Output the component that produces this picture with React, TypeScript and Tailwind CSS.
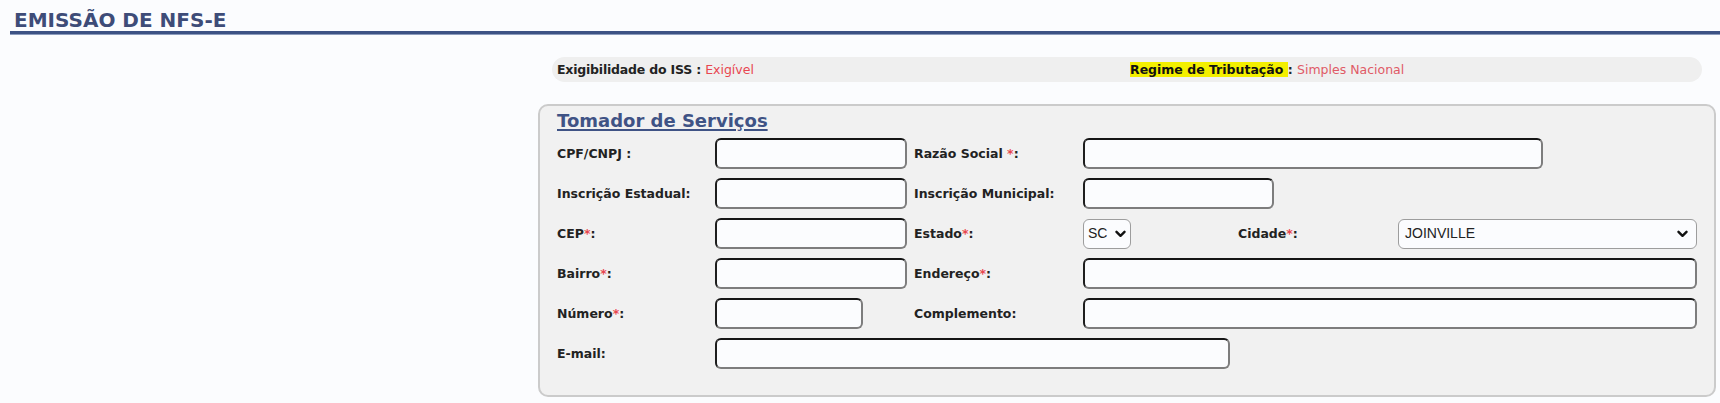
import React from "react";

const Req = () => <span className="text-[#e8464f]">*</span>;

const inputCls =
  "h-[31px] rounded-[6px] bg-[#fbfcfe] border-2 border-t-[#151515] border-l-[#1e1e1e] border-r-[#7d7d7d] border-b-[#7d7d7d]";

function Chevron() {
  return (
    <svg width="11" height="8" viewBox="0 0 11 8" fill="none">
      <path d="M1.5 1.8 L5.5 5.8 L9.5 1.8" stroke="#111" strokeWidth="2.4" strokeLinecap="round" strokeLinejoin="round" />
    </svg>
  );
}

function Label({ children }: { children: React.ReactNode }) {
  return <div className="text-[12.5px] font-bold text-[#222] leading-[15px]">{children}</div>;
}

export default function App() {
  return (
    <div className="min-h-screen bg-[#fbfcfe] font-['DejaVu_Sans',Verdana,sans-serif]">
      <div className="pt-[10px] pl-[10px]">
        <h1 className="pl-[4px] text-[20px] leading-[21px] font-bold text-[#3e4c78]">EMISSÃO DE NFS-E</h1>
        <div className="h-[4px] bg-[#3d5284] border-b border-b-[#8c9cbd]" />
      </div>

      <div className="ml-[552px] mr-[18px]">
        <div className="mt-[22px] h-[25px] rounded-full bg-[#efefef] grid grid-cols-2 items-center text-[12.5px] leading-[15px]">
          <div className="pl-[5px]">
            <span className="font-bold text-[#222] tracking-[-0.2px]">Exigibilidade do ISS : </span>
            <span className="text-[#e8464f]">Exigível</span>
          </div>
          <div className="pl-[3px]">
            <span className="font-bold text-[#111] bg-[#f3ef00]">Regime de Tributação </span>
            <span className="font-bold text-[#222]">: </span>
            <span className="text-[#e05a66]">Simples Nacional</span>
          </div>
        </div>

        <div className="mt-[22px] -ml-[14px] -mr-[14px] h-[293px] rounded-[10px] border-2 border-[#cbcbcb] bg-[#f1f1f1] pl-[17px] pr-[17px] pt-[4px]">
          <h2 className="text-[18px] leading-[21px] font-bold text-[#3f5385] underline underline-offset-[2px] decoration-[1.5px]">
            Tomador de Serviços
          </h2>

          <div className="mt-[7px] grid grid-cols-[158px_199px_169px_1fr] auto-rows-[31px] gap-y-[9px] items-center">
            <Label>CPF/CNPJ :</Label>
            <div className={`${inputCls} w-[192px]`} />
            <Label>Razão Social <Req />:</Label>
            <div className={`${inputCls} w-[460px]`} />

            <Label>Inscrição Estadual:</Label>
            <div className={`${inputCls} w-[192px]`} />
            <Label>Inscrição Municipal:</Label>
            <div className={`${inputCls} w-[191px]`} />

            <Label>CEP<Req />:</Label>
            <div className={`${inputCls} w-[192px]`} />
            <Label>Estado<Req />:</Label>
            <div className="flex items-center">
              <div className="w-[48px] h-[30px] rounded-[6px] border border-[#9d9d9d] bg-[#fbfcfe] flex items-center justify-between pl-[4px] pr-[4px] font-['Liberation_Sans',Arial,sans-serif] text-[14px] text-[#222]">
                <span>SC</span>
                <Chevron />
              </div>
              <div className="ml-[107px] w-[160px]">
                <Label>Cidade<Req />:</Label>
              </div>
              <div className="flex-1 h-[30px] rounded-[6px] border border-[#9d9d9d] bg-[#fbfcfe] flex items-center justify-between pl-[6px] pr-[8px] font-['Liberation_Sans',Arial,sans-serif] text-[14px] text-[#222]">
                <span>JOINVILLE</span>
                <Chevron />
              </div>
            </div>

            <Label>Bairro<Req />:</Label>
            <div className={`${inputCls} w-[192px]`} />
            <Label>Endereço<Req />:</Label>
            <div className={`${inputCls} w-full`} />

            <Label>Número<Req />:</Label>
            <div className={`${inputCls} w-[148px]`} />
            <Label>Complemento:</Label>
            <div className={`${inputCls} w-full`} />

            <Label>E-mail:</Label>
            <div className="col-span-3">
              <div className={`${inputCls} w-[515px]`} />
            </div>
          </div>
        </div>
      </div>
    </div>
  );
}
